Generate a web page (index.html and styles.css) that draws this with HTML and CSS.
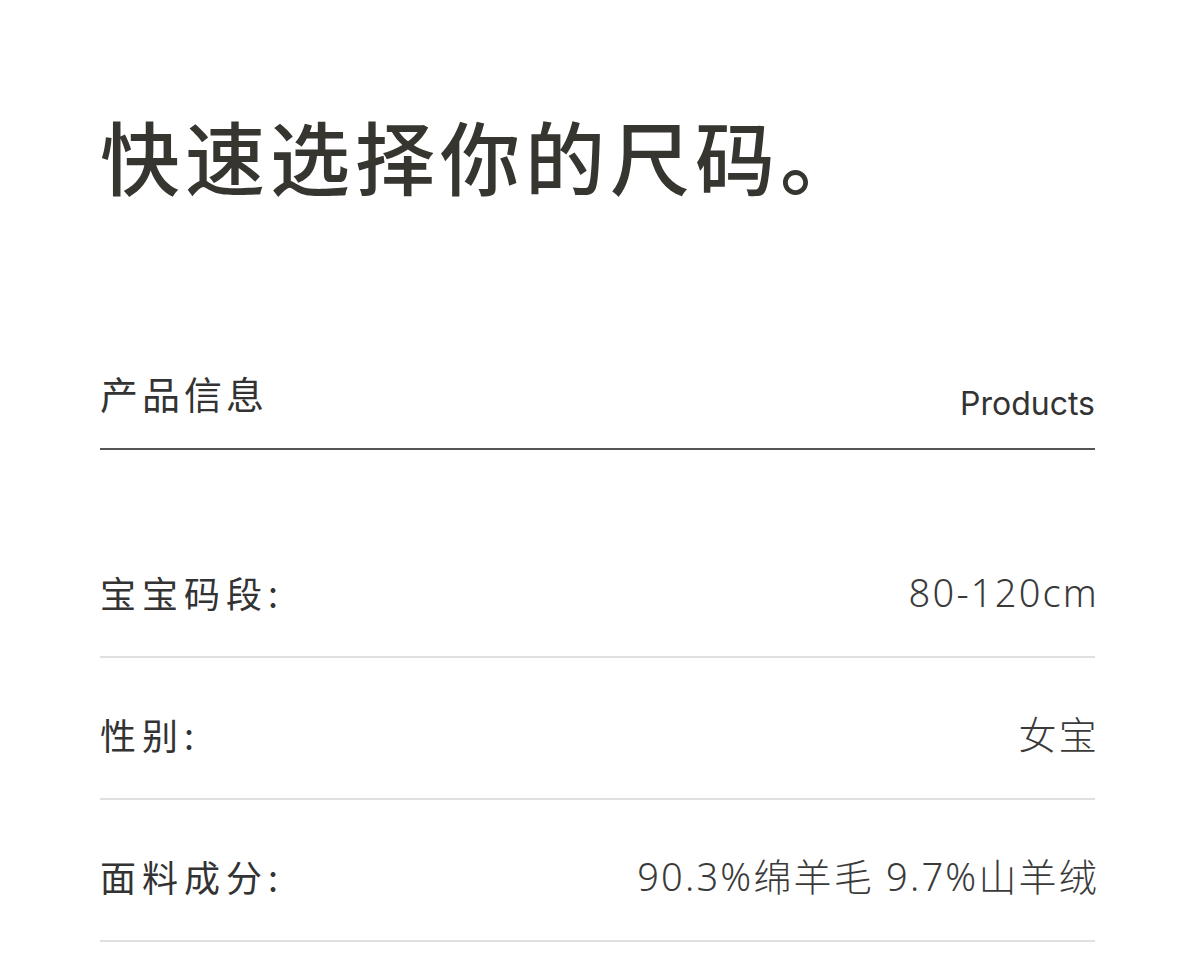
FILE: index.html
```html
<!DOCTYPE html>
<html lang="zh-CN">
<head>
    <meta charset="UTF-8">
    <meta name="viewport" content="width=device-width, initial-scale=1.0">
    <title>快速选择你的尺码</title>
    <link rel="stylesheet" href="styles.css">
</head>
<body>
    <div class="container">
        <h1 class="title">快速选择你的尺码。</h1>

        <div class="section-head">
            <span class="section-name">产品信息</span>
            <span class="section-en">Products</span>
        </div>

        <div class="info-list">
            <div class="info-row">
                <span class="info-label">宝宝码段:</span>
                <span class="info-value">80-120cm</span>
            </div>
            <div class="info-row">
                <span class="info-label">性别:</span>
                <span class="info-value">女宝</span>
            </div>
            <div class="info-row">
                <span class="info-label">面料成分:</span>
                <span class="info-value">90.3%绵羊毛 9.7%山羊绒</span>
            </div>
        </div>
    </div>
</body>
</html>
```

FILE: styles.css
```css
body {
    margin: 0;
    padding: 0;
    background-color: #fff;
    color: #333;
    font-family: "Noto Sans CJK SC", "Noto Sans", sans-serif;
}

.container {
    width: 995px;
    margin: 0 0 0 100px;
    padding-top: 110px;
}

.title {
    margin: 0;
    font-size: 80px;
    font-weight: 500;
    line-height: 1.1;
    letter-spacing: 5px;
    color: #363530;
}

.section-head {
    display: flex;
    justify-content: space-between;
    align-items: flex-end;
    margin-top: 176px;
    padding-bottom: 32px;
    border-bottom: 2px solid #555;
}

.section-name {
    margin-bottom: 4px;
    font-size: 38px;
    line-height: 1;
    letter-spacing: 4px;
    color: #333;
}

.section-en {
    margin-bottom: -4px;
    font-family: Inter, "Noto Sans", sans-serif;
    font-size: 32px;
    line-height: 1;
    color: #333;
}

.info-list {
    margin-top: 123px;
}

.info-row {
    display: flex;
    justify-content: space-between;
    align-items: center;
    padding: 57px 0 45px;
    border-bottom: 2px solid #e0e0e0;
    line-height: 38px;
}

.info-list .info-row:first-child {
    padding-top: 0;
}

.info-label {
    font-size: 36px;
    letter-spacing: 6px;
    color: #333;
}

.info-value {
    font-family: "Noto Sans", "Noto Sans CJK SC", sans-serif;
    font-size: 38px;
    font-weight: 300;
    letter-spacing: 2.2px;
    margin-right: -4px;
    color: #3a3a3a;
}
```
